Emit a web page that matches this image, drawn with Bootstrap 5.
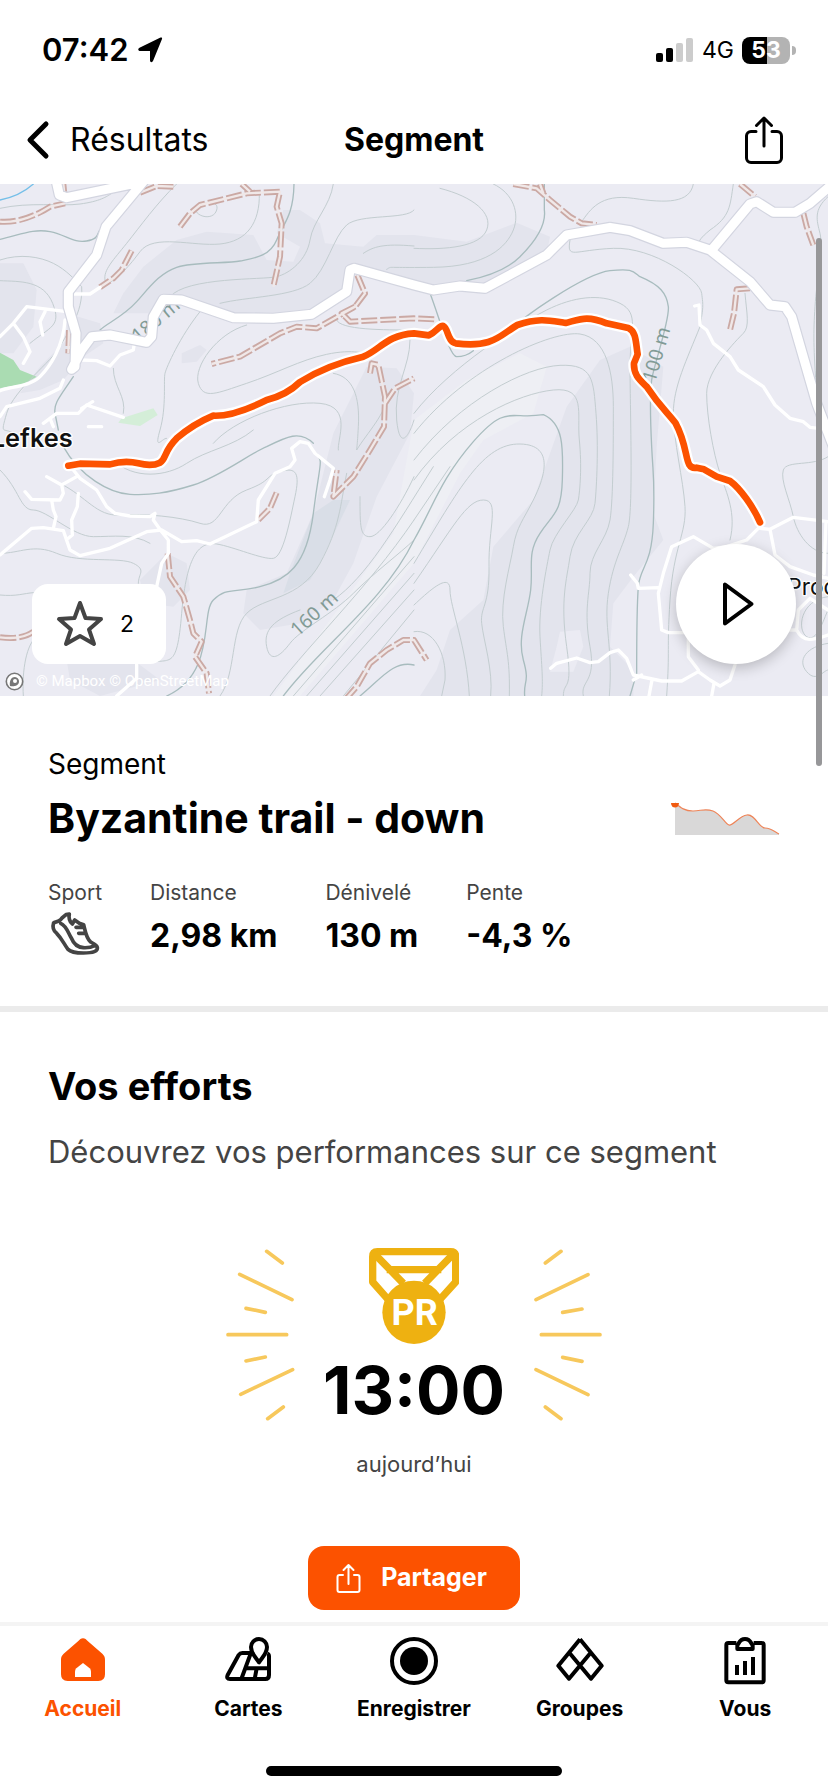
<!DOCTYPE html>
<html lang="fr">
<head>
<meta charset="utf-8">
<meta name="viewport" content="width=device-width, initial-scale=1">
<title>Segment - Byzantine trail - down</title>
<link href="https://cdn.jsdelivr.net/npm/bootstrap@5.3.0/dist/css/bootstrap.min.css" rel="stylesheet">
<style>
  body { font-family: "Inter", "Liberation Sans", sans-serif; color: #000; background: #fff; }
  svg { display: block; flex: none; }
  .ink { color: #444; }
  .status-bar { padding: 28px 32px 24px 42px; }
  .clock { font-size: 31px; line-height: 44px; font-weight: 600; }
  .network { font-size: 23px; line-height: 44px; }
  .battery { width: 48px; height: 27px; border-radius: 8px; background: linear-gradient(90deg, #000 53%, #b3b3b3 53%); color: #fff; font-size: 23px; line-height: 27px; font-weight: 700; }
  .battery-tip { width: 4px; height: 9px; margin-left: 2px; border-radius: 0 4px 4px 0; background: #b3b3b3; }
  .title-bar { height: 88px; padding: 0 26px; font-size: 32px; line-height: 40px; }
  .title-bar > * { flex: 1 1 0; }
  .title-bar h1 { font-size: 32px; line-height: 40px; font-weight: 700; }
  .title-bar .share-link { margin-right: 18px; }
  .map-view svg.terrain { width: 100%; height: auto; }
  .star-card { left: 32px; bottom: 32px; padding: 0 32px 0 24px; height: 80px; border-radius: 16px; background: #fff; font-size: 23px; }
  .play-button { right: 32px; bottom: 32px; width: 120px; height: 120px; background: #fff; box-shadow: 0 4px 14px rgba(0,0,0,.22); }
  .play-button:hover { background: #fff; }
  .attribution { left: 5px; bottom: 3px; font-size: 15px; line-height: 24px; color: #fff; font-family: Roboto, sans-serif; }
  .scroll-thumb { right: 6px; top: 54px; width: 6px; height: 528px; border-radius: 3px; background: #979799; z-index: 2; }
  .overview { padding: 48px 48px 48px; }
  .kind { font-size: 28px; line-height: 40px; }
  .segment-name { font-size: 41px; line-height: 52px; font-weight: 700; }
  .stats { gap: 48px; margin-top: 34px; }
  .stats dt { font-size: 21px; line-height: 30px; font-weight: 400; }
  .stats dd { font-size: 32px; line-height: 44px; font-weight: 700; margin: 6px 0 0; }
  .stats dd.pictogram { margin: 0; }
  .band { height: 6px; background: #ebebeb; }
  .efforts { padding: 48px 48px 12px; }
  .efforts h2 { font-size: 38px; line-height: 52px; font-weight: 700; }
  .lead-in { font-size: 31px; line-height: 44px; margin-top: 18px; }
  .record { margin-top: 74px; gap: 28px; }
  .best-time { font-size: 66px; line-height: 80px; font-weight: 700; margin-top: 6px; }
  .when { font-size: 22px; line-height: 32px; margin-top: 18px; }
  .share-button { height: 64px; margin-top: 66px; padding: 0 33px 0 28px; gap: 20px; border-radius: 16px; background: #fc5200; color: #fff; font-size: 25px; font-weight: 700; }
  .tab-bar { border-top: 4px solid #f4f4f4; padding-top: 11px; }
  .tab-bar a { font-size: 21px; line-height: 28px; font-weight: 700; color: #000; }
  .tab-bar a.current { color: #fc5200; }
  .tab-bar svg { margin: 0 auto 10px; }
  .home-line { width: 296px; height: 10px; border-radius: 5px; background: #000; margin: 43px auto 16px; }
</style>
</head>
<body class="d-flex flex-column min-vh-100">

<div class="status-bar d-flex justify-content-between align-items-start">
  <div class="d-flex align-items-center gap-2 clock">07:42
    <svg width="26" height="26" viewBox="0 0 26 26"><path d="M25 2 16 24c-.8 1.800-3 1.400-3-.8V14H3.500C1 14 .5 11.600 2.500 10.700L23 .8c1.500-.7 2.500-.2 2 1.200z"/></svg>
  </div>
  <div class="d-flex align-items-center network">
    <svg class="me-2" width="38" height="24" viewBox="0 0 38 24"><rect y="15" width="7" height="9" rx="2"/><rect x="10" y="10" width="7" height="14" rx="2"/><g fill="#ccc"><rect x="20" y="5" width="7" height="19" rx="2"/><rect x="30" width="7" height="24" rx="2"/></g></svg>
    <span class="me-2">4G</span>
    <span class="battery text-center">53</span><span class="battery-tip"></span>
  </div>
</div>

<header class="title-bar d-flex align-items-center">
  <a href="#" class="d-flex align-items-center text-black text-decoration-none">
    <svg width="24" height="40" viewBox="0 0 24 40" fill="none" stroke="#000" stroke-width="5" stroke-linecap="round" stroke-linejoin="round"><path d="M20 4 4 20l16 16"/></svg>
    <span class="ms-3 ps-1">Résultats</span>
  </a>
  <h1 class="m-0 text-center">Segment</h1>
  <div class="d-flex justify-content-end">
    <button type="button" class="btn p-0 border-0 share-link" aria-label="Partager le segment">
      <svg width="40" height="48" viewBox="0 0 40 48" fill="none" stroke="#000" stroke-width="3" stroke-linecap="round" stroke-linejoin="round"><path d="M12 15.500H7a4.500 4.500 0 0 0-4.500 4.500v22A4.500 4.500 0 0 0 7 46.500h26a4.500 4.500 0 0 0 4.500-4.500V20a4.500 4.500 0 0 0-4.500-4.500h-5M20 30V3M12.500 9.500 20 2l7.500 7.500"/></svg>
    </button>
  </div>
</header>

<section class="map-view position-relative" aria-label="Carte du segment">
  <svg class="terrain" viewBox="0 12 2484 1536" fill="none" stroke-linecap="round" stroke-linejoin="round">
    <rect y="12" width="2484" height="1536" fill="#ebebf3"/>
    <!-- relief shading -->
    <g fill="#e3e4ed">
      <path d="M340 400 370 340 430 260 530 180 620 155 760 165 800 240 880 245 900 200 830 160 850 90 900 90 960 130 975 190 1090 200 1130 165 1242 165 1400 185 1550 128 1650 170 1640 220 1450 320 1240 310 1060 265 1030 345 930 400 700 410 540 350 480 365 450 400Z"/>
      <path d="M0 250 70 250 110 330 100 440 40 520 0 520ZM200 400 300 430 310 490 250 530 190 600 120 630 60 640 120 560 200 480Z"/>
      <path d="M1100 560 1190 565 1242 640 1230 760 1130 950 1060 1150 1000 1260 900 1330 780 1350 730 1300 740 1230 860 1180 940 1000 1000 760Z"/>
      <path d="M1890 500 1990 560 1970 800 1960 1000 1990 1080 1900 1190 1840 1270 1830 1400 1900 1470 1900 1548 1260 1548 1310 1470 1350 1350 1450 1260 1480 1100 1600 960 1700 680 1800 540Z"/>
      <path d="M420 1200 500 1120 560 1150 570 1230 520 1280 440 1270ZM545 520 600 495 620 510 590 545 545 550ZM200 1440 400 1440 480 1500 300 1548 210 1500Z"/>
    </g>
    <path d="M940 1000 1000 960 1050 960 960 1150 930 1200 850 1240 870 1180Z" fill="#d9dee7"/>
    <path d="M1242 720 1400 600 1560 520 1640 560 1600 700 1450 780 1380 880 1242 1150 900 1548 820 1548 1050 1240 1180 1060Z" fill="#eeeff4"/>
    <path d="M1680 1355 1740 1350 1750 1400 1720 1475 1650 1475 1670 1400Z" fill="#ebebf3"/>
    <path d="M0 518 40 540 60 570 110 590 70 612 0 625Z" fill="#aadcb2"/>
    <path d="M365 715 460 685 473 705 420 738 355 728Z" fill="#d4eed8"/>
    <path d="M0 60C50 50 80 30 100 12" stroke="#74bfe8" stroke-width="4"/>
    <!-- contour lines -->
    <g stroke="#c3cdd0" stroke-width="3">
      <path d="M0 85C90 65 180 80 240 72S320 50 335 40M0 240C60 220 120 230 160 250S225 300 245 320C250 400 200 460 180 500S40 630 20 700 10 740 40 760"/>
      <path d="M0 302C60 305 130 300 158 370S150 440 90 490M530 12C470 70 420 140 380 190S310 270 315 300 380 270 420 215 580 200 660 192 780 130 778 40"/>
      <path d="M585 80C580 110 640 125 650 90S600 70 585 80M1000 12C990 80 940 120 930 180S870 280 830 290 560 290 510 350M1242 90C1220 120 1080 100 1040 135S980 270 930 310 740 350 660 370M1242 198C1150 190 1120 200 1090 220"/>
      <path d="M1010 420C1020 450 1150 450 1242 450M600 395C540 470 500 560 495 580S500 680 480 750 490 770 500 775M740 435C650 460 580 560 595 610S650 640 740 610 900 540 980 523 1100 520 1120 530"/>
      <path d="M340 565C340 620 380 650 370 700M1000 580C1060 590 1080 650 1075 740S1070 790 1070 810C1100 760 1160 700 1165 640M1230 480C1230 560 1180 620 1190 720S1230 760 1242 720"/>
      <path d="M640 790C700 720 860 660 960 670S1010 780 1015 810M1480 12C1540 40 1560 100 1540 150S1460 260 1300 262 1180 258 1160 268M1320 25C1420 50 1480 100 1460 150S1340 210 1242 205"/>
      <path d="M2080 12C2070 70 2000 70 1900 55S1770 90 1745 125M2200 12C2190 80 2190 110 2130 150 2100 175 2100 180 2095 190M1710 180C1700 240 1720 210 1840 205S2100 300 2105 340 2110 380 2100 440C2060 540 2020 620 2020 700S2050 900 2055 980 2020 1100 2010 1260 2010 1400 2000 1548"/>
      <path d="M2235 340C2240 400 2250 440 2230 460S2120 570 2120 640 2140 820 2160 880 2210 1000 2190 1080M2484 50C2440 90 2450 120 2460 160S2450 300 2445 380 2440 500 2450 640"/>
      <path d="M1242 760C1400 560 1660 450 1740 462S1840 580 1840 680 1840 960 1830 1020 1770 1120 1770 1180 1750 1290 1770 1400 1740 1500 1750 1548M1242 700C1350 560 1560 430 1640 390S1800 340 1860 370 1890 450 1890 560 1900 980 1885 1040 1840 1140 1825 1240 1840 1400 1828 1548"/>
      <path d="M1242 840C1380 660 1580 560 1680 556S1780 600 1788 700 1790 920 1785 970 1720 1060 1710 1130 1680 1260 1700 1400 1690 1500 1690 1548M1242 900C1370 720 1560 640 1660 630S1730 700 1738 780 1740 930 1735 960 1660 1060 1650 1110 1615 1280 1620 1370 1630 1500 1625 1548"/>
      <path d="M1242 1150C1380 920 1450 790 1560 792S1630 900 1600 960 1550 1040 1540 1100 1500 1260 1510 1340 1530 1440 1528 1548M1242 1210C1360 1040 1400 960 1450 960S1465 1040 1467 1160 1440 1280 1445 1330 1480 1470 1472 1548M1242 1275C1300 1220 1350 1180 1350 1230S1400 1400 1408 1548M1242 1355C1300 1345 1340 1420 1335 1500L1325 1548"/>
      <path d="M810 1548C900 1420 1100 1230 1242 1020M880 1548 1242 1130M920 1548 1242 1180M960 1548 1242 1230M1030 1548 1242 1290M1242 1020 1350 860M1000 1260C1100 1190 1180 1050 1300 860"/>
      <path d="M0 870C60 930 60 990 100 990S220 1070 280 1070 400 1060 450 1090M0 1120C60 1120 100 1090 170 1120S360 1130 400 1150 415 1180 415 1210M0 1245C50 1250 70 1240 100 1238M180 910C260 950 290 1010 360 1005S540 1010 600 1030 660 960 740 930 790 890 840 875 900 880 885 950 850 1130 820 1135 700 1100 650 1092 560 1120 545 1300 510 1430 440 1450"/>
      <path d="M70 1548C65 1470 80 1390 110 1370M900 1290C820 1320 790 1350 800 1400S840 1430 870 1390 1000 1300 1060 1240 1200 1120 1242 1080M660 1548C710 1480 690 1350 740 1300S900 1260 960 1150 1020 980 1040 880M1080 950C1080 1040 1080 1070 1110 1070S1200 980 1242 890"/>
      <path d="M340 840C400 900 500 890 560 850S700 800 760 750M2484 830C2440 860 2360 840 2350 870S2370 960 2380 1010 2430 1120 2484 1120M2484 1250C2400 1260 2390 1350 2420 1370S2470 1320 2484 1290M2484 1390C2420 1400 2390 1440 2420 1475S2470 1470 2484 1470"/>
    </g>
    <g stroke="#a8bcbe" stroke-width="4">
      <path d="M0 178C60 165 100 145 150 155S220 190 260 183 290 160 300 150M882 12C880 110 850 130 830 180S760 235 720 243 580 245 530 262 450 320 410 365 320 430 300 450M1633 12V90C1640 140 1600 190 1560 230S1460 290 1400 302M220 590C180 650 160 670 165 700L175 750"/>
      <path d="M1292 345C1320 420 1350 530 1370 530S1410 520 1420 512M1500 480C1560 410 1760 280 1830 272S1900 275 1920 290C1980 315 2000 340 2005 380S1960 560 1955 600 1950 700 1955 800 1965 900 1960 1030 1920 1160 1915 1220 1910 1380 1910 1480L1890 1548"/>
      <path d="M1242 1080C1300 980 1320 900 1420 785S1530 720 1630 704C1690 730 1690 800 1687 900S1660 1000 1620 1060 1600 1160 1592 1230 1550 1370 1570 1440 1570 1500 1574 1548M850 1548C960 1400 1150 1270 1242 1080M500 1548C650 1480 600 1300 640 1260S700 1240 780 1220 920 1160 940 1000 970 850 950 820M190 800C240 890 330 940 390 943S500 940 580 915 750 820 800 800C860 770 900 750 940 790M1080 1548C1140 1500 1180 1440 1242 1455"/>
    </g>
    <!-- footpaths: outer edges, then pale centre -->
    <g stroke="#cba9a4" stroke-width="18" stroke-linecap="butt" stroke-dasharray="48 9">
      <path d="M190 12 195 60M0 125C60 130 120 100 150 80L195 70M540 140 570 100 600 75 740 40 840 35 830 80 845 130 840 230 820 320M725 12 750 35M420 38 470 18 520 20M395 212 365 270 340 295 300 322M1072 285 1095 340 1065 380 950 445 890 440 840 460 720 530 635 552M1065 380 1025 400 1050 425 1242 415 1305 418M1110 580 1115 550 1135 555 1155 650 1152 740 1110 810 1060 890 1000 950 1010 870M1155 670 1185 625 1242 595M207 450 205 520"/>
      <path d="M1540 12 1610 25 1650 60 1710 110 1745 130 1790 135M1620 12 1630 40M2220 12 2265 50M2410 100 2420 140 2440 195M2250 325 2210 328 2202 400 2190 450M830 938 810 985 775 1020M503 1120 510 1190 550 1250 570 1320 580 1360 605 1385 585 1430 620 1480 627 1540M0 1372C50 1378 80 1370 100 1355M1035 1560 1070 1520 1110 1450 1160 1410 1210 1380 1242 1380 1280 1440"/>
    </g>
    <g stroke="#f0e8e8" stroke-width="7" stroke-linecap="butt">
      <path d="M190 12 195 60M0 125C60 130 120 100 150 80L195 70M540 140 570 100 600 75 740 40 840 35 830 80 845 130 840 230 820 320M725 12 750 35M420 38 470 18 520 20M395 212 365 270 340 295 300 322M1072 285 1095 340 1065 380 950 445 890 440 840 460 720 530 635 552M1065 380 1025 400 1050 425 1242 415 1305 418M1110 580 1115 550 1135 555 1155 650 1152 740 1110 810 1060 890 1000 950 1010 870M1155 670 1185 625 1242 595M207 450 205 520"/>
      <path d="M1540 12 1610 25 1650 60 1710 110 1745 130 1790 135M1620 12 1630 40M2220 12 2265 50M2410 100 2420 140 2440 195M2250 325 2210 328 2202 400 2190 450M830 938 810 985 775 1020M503 1120 510 1190 550 1250 570 1320 580 1360 605 1385 585 1430 620 1480 627 1540M0 1372C50 1378 80 1370 100 1355M1035 1560 1070 1520 1110 1450 1160 1410 1210 1380 1242 1380 1280 1440"/>
    </g>
    <!-- elevation labels -->
    <g fill="#829b96" font-family="Noto Sans, sans-serif" font-size="58">
      <text transform="translate(415 490) rotate(-40)">180 m</text>
      <text transform="translate(893 1372) rotate(-42)">160 m</text>
      <text transform="translate(1965 610) rotate(-74)">100 m</text>
    </g>
    <!-- lanes -->
    <g stroke="#fff" stroke-width="10">
      <path d="M200 395 80 380 40 430 0 470M40 430 70 470 90 515 70 550M135 395 120 425 128 465M195 420C190 500 150 560 120 590S30 620 0 632M190 600 180 625 120 655 20 680 0 710M215 342 270 342 300 322M245 540 290 542 330 558 360 525 400 510 403 490M130 730 170 700 235 700 260 675 370 712M265 740 305 740M245 685 278 665M150 715 160 740"/>
      <path d="M220 870 240 895 290 930 320 980 345 1000 390 1008 450 1010 465 1000 460 1020 485 1055 505 1080 505 1120 485 1150 470 1220M230 890 185 915 140 890M185 915 190 940 180 960 95 958 75 935M155 960 160 990 168 1010 160 1045M235 940 232 980 215 1020 217 1065 205 1075M0 1125 95 1045 130 1043 190 1052 210 1110 240 1127 330 1105 440 1055 485 1050 545 1085 590 1082 630 1092 770 1025 775 960 825 880 870 860 885 840 875 805 900 785 925 790 945 820 1000 865 990 900 973 950"/>
      <path d="M410 1430V1495L350 1548M2084 378 2097 375 2100 435 2120 450 2140 490 2190 530 2215 570 2290 620 2325 675 2370 715 2410 725 2430 742 2484 748M2280 1040 2240 1080 2180 1100 2140 1105 2080 1070 2015 1100 1990 1180 1975 1240 1985 1350 2005 1358 2080 1358M1975 1223 1915 1225 1912 1210 1892 1185M2280 1045 2310 1048 2380 1012 2484 1025M2310 1048 2325 1125 2370 1160 2440 1185 2484 1195M2478 1025 2472 1180"/>
      <path d="M1652 1465 1670 1450 1730 1434 1770 1448 1795 1445 1830 1418 1855 1410 1880 1435 1900 1485 1985 1503 2045 1503 2095 1475 2130 1500 2160 1518 2190 1500 2205 1455M1900 1500 1925 1485M1955 1505 1947 1548M2142 1510 2135 1548M2065 1350 2065 1430 2095 1470M2360 1350H2390L2395 1290 2430 1255 2484 1290M2390 1350C2410 1390 2440 1380 2484 1365"/>
    </g>
    <!-- roads: casing, then surface -->
    <g stroke="#d3d5e0" stroke-width="34">
      <path d="M168 0 178 45 200 53 430 5 318 140 290 225 205 335 205 380 228 460 225 560 215 568 245 510 275 470 330 465 440 487 455 470 460 410 490 358 545 360 700 413 820 415 935 403 1040 335 1050 270 1062 265 1242 315 1300 330 1380 318 1455 325 1640 225 1700 165 1830 142 1890 152 1990 190 2060 187 2130 210 2250 305 2310 375 2355 380 2375 410 2450 670 2500 800"/>
      <path d="M2135 210 2250 72 2270 65 2320 97 2385 97 2430 70 2500 10"/>
    </g>
    <g stroke="#fff" stroke-width="27">
      <path d="M168 0 178 45 200 53 430 5 318 140 290 225 205 335 205 380 228 460 225 560 215 568 245 510 275 470 330 465 440 487 455 470 460 410 490 358 545 360 700 413 820 415 935 403 1040 335 1050 270 1062 265 1242 315 1300 330 1380 318 1455 325 1640 225 1700 165 1830 142 1890 152 1990 190 2060 187 2130 210 2250 305 2310 375 2355 380 2375 410 2450 670 2500 800"/>
      <path d="M2135 210 2250 72 2270 65 2320 97 2385 97 2430 70 2500 10"/>
    </g>
    <!-- segment route: halo, then line -->
    <path d="M205 857 240 851 330 853Q375 840 415 850T480 848C500 835 490 815 530 775Q580 732 640 707 700 710 800 660 860 645 900 606 980 555 1090 530C1140 510 1160 465 1242 460L1287 466C1310 455 1318 435 1330 438 1345 445 1342 485 1367 490 1480 505 1500 465 1552 435 1620 412 1650 422 1697 429 1740 418 1760 405 1820 430L1885 444C1910 455 1907 490 1913 523L1902 550C1900 585 1920 600 1940 620 1980 680 2000 695 2027 730 2070 810 2050 870 2090 863L2112 868 2150 890 2190 903C2220 925 2260 980 2280 1027" stroke="#fff" stroke-width="34"/>
    <path d="M205 857 240 851 330 853Q375 840 415 850T480 848C500 835 490 815 530 775Q580 732 640 707 700 710 800 660 860 645 900 606 980 555 1090 530C1140 510 1160 465 1242 460L1287 466C1310 455 1318 435 1330 438 1345 445 1342 485 1367 490 1480 505 1500 465 1552 435 1620 412 1650 422 1697 429 1740 418 1760 405 1820 430L1885 444C1910 455 1907 490 1913 523L1902 550C1900 585 1920 600 1940 620 1980 680 2000 695 2027 730 2070 810 2050 870 2090 863L2112 868 2150 890 2190 903C2220 925 2260 980 2280 1027" stroke="#fc5200" stroke-width="20"/>
    <g fill="#111" stroke="#fff" stroke-width="8" paint-order="stroke" font-family="Inter, sans-serif">
      <text x="218" y="801" text-anchor="end" font-size="76" font-weight="600">Lefkes</text>
      <text x="2362" y="1246" font-size="68">Prodromos</text>
    </g>
  </svg>

  <div class="scroll-thumb position-absolute"></div>

  <div class="star-card position-absolute d-flex align-items-center gap-3">
    <svg width="48" height="48" viewBox="0 0 48 48" fill="none" stroke="#444" stroke-width="4" stroke-linejoin="round"><path d="M24 3 29.500 18 45 19 33 29.500 38 44 24 36 10 44 15 29.500 3 19 18.500 18Z"/></svg>
    <span>2</span>
  </div>
  <button type="button" class="btn play-button position-absolute rounded-circle d-flex align-items-center justify-content-center p-0 border-0" aria-label="Lire le parcours">
    <svg class="ms-1" width="34" height="46" viewBox="0 0 34 46" fill="none" stroke="#000" stroke-width="4" stroke-linejoin="round"><path d="M4 3.500V42.500L30.500 23Z"/></svg>
  </button>
  <div class="attribution position-absolute d-flex align-items-center gap-2">
    <svg width="19" height="19" viewBox="0 0 19 19"><circle cx="9.500" cy="9.500" r="8.200" fill="#fff" stroke="#777" stroke-width="1.600"/><path d="M5 14c-.7-4 .5-9 5-9a4.200 4.200 0 0 1 4 4.500C14 14 8.500 14.700 5 14z" fill="#777"/><circle cx="10" cy="9" r="2" fill="#fff"/></svg>
    <span class="ms-1">© Mapbox © OpenStreetMap</span>
  </div>
</section>

<main class="flex-grow-1">
  <section class="overview">
    <div class="d-flex justify-content-between align-items-end">
      <div>
        <div class="kind">Segment</div>
        <h2 class="segment-name mt-2 mb-0">Byzantine trail - down</h2>
      </div>
      <svg class="mb-2" width="109" height="34" viewBox="0 0 109 34"><path d="M4 2C10 6 14 9 22 9S34 6 42 9 54 22 58 23 68 14 76 13 88 26 94 26 104 30 108 32V33H4Z" fill="#d9d8d8"/><path d="M4 1C10 6 14 9 22 9S34 6 42 9 54 22 58 23 68 14 76 13 88 26 94 26 104 30 108 32" fill="none" stroke="#ee8458" stroke-width="1.200"/><path d="M0 1h8a4 4.500 0 0 1-8 0z" fill="#f05a10"/></svg>
    </div>
    <dl class="stats d-flex mb-0">
      <div><dt class="ink">Sport</dt><dd class="pictogram">
        <svg role="img" aria-label="Course à pied" width="52" height="47" viewBox="24 22 156 141" fill="none" stroke="#444" stroke-width="11" stroke-linejoin="round" stroke-linecap="round"><path d="M78 42 66 52C60 62 50 64 41 66 36 82 42 92 50 98 66 114 72 130 84 146 92 154 110 157 130 157 160 157 174 152 172 140 170 132 162 130 152 124 138 112 136 92 131 72L118 68 104 58 97 70C88 62 86 50 88 40ZM62 68C80 76 84 96 94 112 102 132 112 140 130 141 146 142 154 140 166 134M128 80H108M134 98H116"/></svg>
      </dd></div>
      <div><dt class="ink">Distance</dt><dd>2,98 km</dd></div>
      <div><dt class="ink">Dénivelé</dt><dd>130 m</dd></div>
      <div><dt class="ink">Pente</dt><dd>-4,3 %</dd></div>
    </dl>
  </section>

  <div class="band"></div>

  <section class="efforts">
    <h2 class="m-0">Vos efforts</h2>
    <p class="lead-in ink mb-0">Découvrez vos performances sur ce segment</p>

    <div class="record d-flex justify-content-center">
      <svg width="70" height="174" viewBox="75 82 210 522" fill="none" stroke="#f7c85c" stroke-width="11" stroke-linecap="round"><path d="M200 92 247 127M119 161 276 237M138 263 196 275M84 342H260M138 421 196 409M122 521 278 447M203 594 250 559"/></svg>
      <div class="text-center">
        <svg class="mx-auto" width="90" height="96" viewBox="507 84 270 288"><g fill="none" stroke="#eeb111" stroke-width="22" stroke-linejoin="round"><path d="M532 95H752Q767 95 767 110V186L722 236H562L518 186V110Q518 95 532 95Z"/><path d="M522 100 610 190M762 100 674 190M560 149H724"/></g><circle cx="642" cy="277" r="95" fill="#eeb111"/><text x="644" y="315" text-anchor="middle" font-family="Roboto, sans-serif" font-weight="700" font-size="108" fill="#fff">PR</text></svg>
        <div class="best-time">13:00</div>
      </div>
      <svg width="70" height="174" viewBox="1000 82 210 522" fill="none" stroke="#f7c85c" stroke-width="11" stroke-linecap="round"><path d="M1084 92 1037 127M1165 162 1009 237M1147 265 1089 275M1025 342H1201M1147 422 1089 410M1165 522 1009 447M1084 594 1037 559"/></svg>
    </div>
    <p class="when ink text-center mb-0">aujourd’hui</p>

    <div class="d-flex justify-content-center">
      <button type="button" class="btn share-button d-flex align-items-center border-0">
        <svg width="25" height="30" viewBox="0 0 25 30" fill="none" stroke="#fff" stroke-width="2" stroke-linecap="round" stroke-linejoin="round"><path d="M7 12H3.500A2 2 0 0 0 1.500 14V27a2 2 0 0 0 2 2h18a2 2 0 0 0 2-2V14a2 2 0 0 0-2-2H18M12.500 21V2M7.500 7l5-5 5 5"/></svg>
        Partager
      </button>
    </div>
  </section>
</main>

<footer>
  <nav class="tab-bar d-flex">
    <a href="#" class="current col text-center text-decoration-none" aria-current="page">
      <svg width="48" height="48" viewBox="0 0 144 144"><path d="M72 4C78 4 82 8 86 12L130 50C136 56 138 60 138 68V112Q138 132 118 132H26Q6 132 6 112V68C6 60 8 56 14 50L58 12C62 8 66 4 72 4Z" fill="#fc5200"/><path d="M72 78 92 94Q96 98 96 104V120H48V104Q48 98 52 94Z" fill="#fff"/></svg>
      Accueil</a>
    <a href="#" class="col text-center text-decoration-none">
      <svg width="48" height="48" viewBox="0 0 144 144" fill="none" stroke="#000" stroke-width="12" stroke-linejoin="round"><path d="M84 48H55Q48 48 44 54L11 114Q6 126 18 126H124Q135 126 135 114V58Q135 52 130 50M80 50 52 126M62 94H135M98 94 92 126"/><path d="M105 76C96 62 81 50 81 30A24 24 0 0 1 129 30C129 50 114 62 105 76Z" fill="#fff"/></svg>
      Cartes</a>
    <a href="#" class="col text-center text-decoration-none">
      <svg width="48" height="48" viewBox="0 0 144 144"><circle cx="72" cy="72" r="66" fill="none" stroke="#000" stroke-width="12"/><circle cx="72" cy="72" r="42"/></svg>
      Enregistrer</a>
    <a href="#" class="col text-center text-decoration-none">
      <svg width="48" height="48" viewBox="0 0 144 144" fill="none" stroke="#000" stroke-width="12" stroke-linejoin="round"><path d="M72 7 137 86 105 125 40 47M72 7 7 86 39 125 104 47"/></svg>
      Groupes</a>
    <a href="#" class="col text-center text-decoration-none">
      <svg width="48" height="48" viewBox="0 0 144 144" fill="none" stroke="#000" stroke-width="12" stroke-linejoin="round"><path d="M46 18H22Q16 18 16 24V130Q16 136 22 136H122Q128 136 128 130V24Q128 18 122 18H98M49 36V24C54 22 54 6 72 6S90 22 95 24V36ZM48 84V114M72 72V114M96 60V114"/></svg>
      Vous</a>
  </nav>
  <div class="home-line"></div>
</footer>

<script src="https://cdn.jsdelivr.net/npm/bootstrap@5.3.0/dist/js/bootstrap.bundle.min.js"></script>
</body>
</html>
